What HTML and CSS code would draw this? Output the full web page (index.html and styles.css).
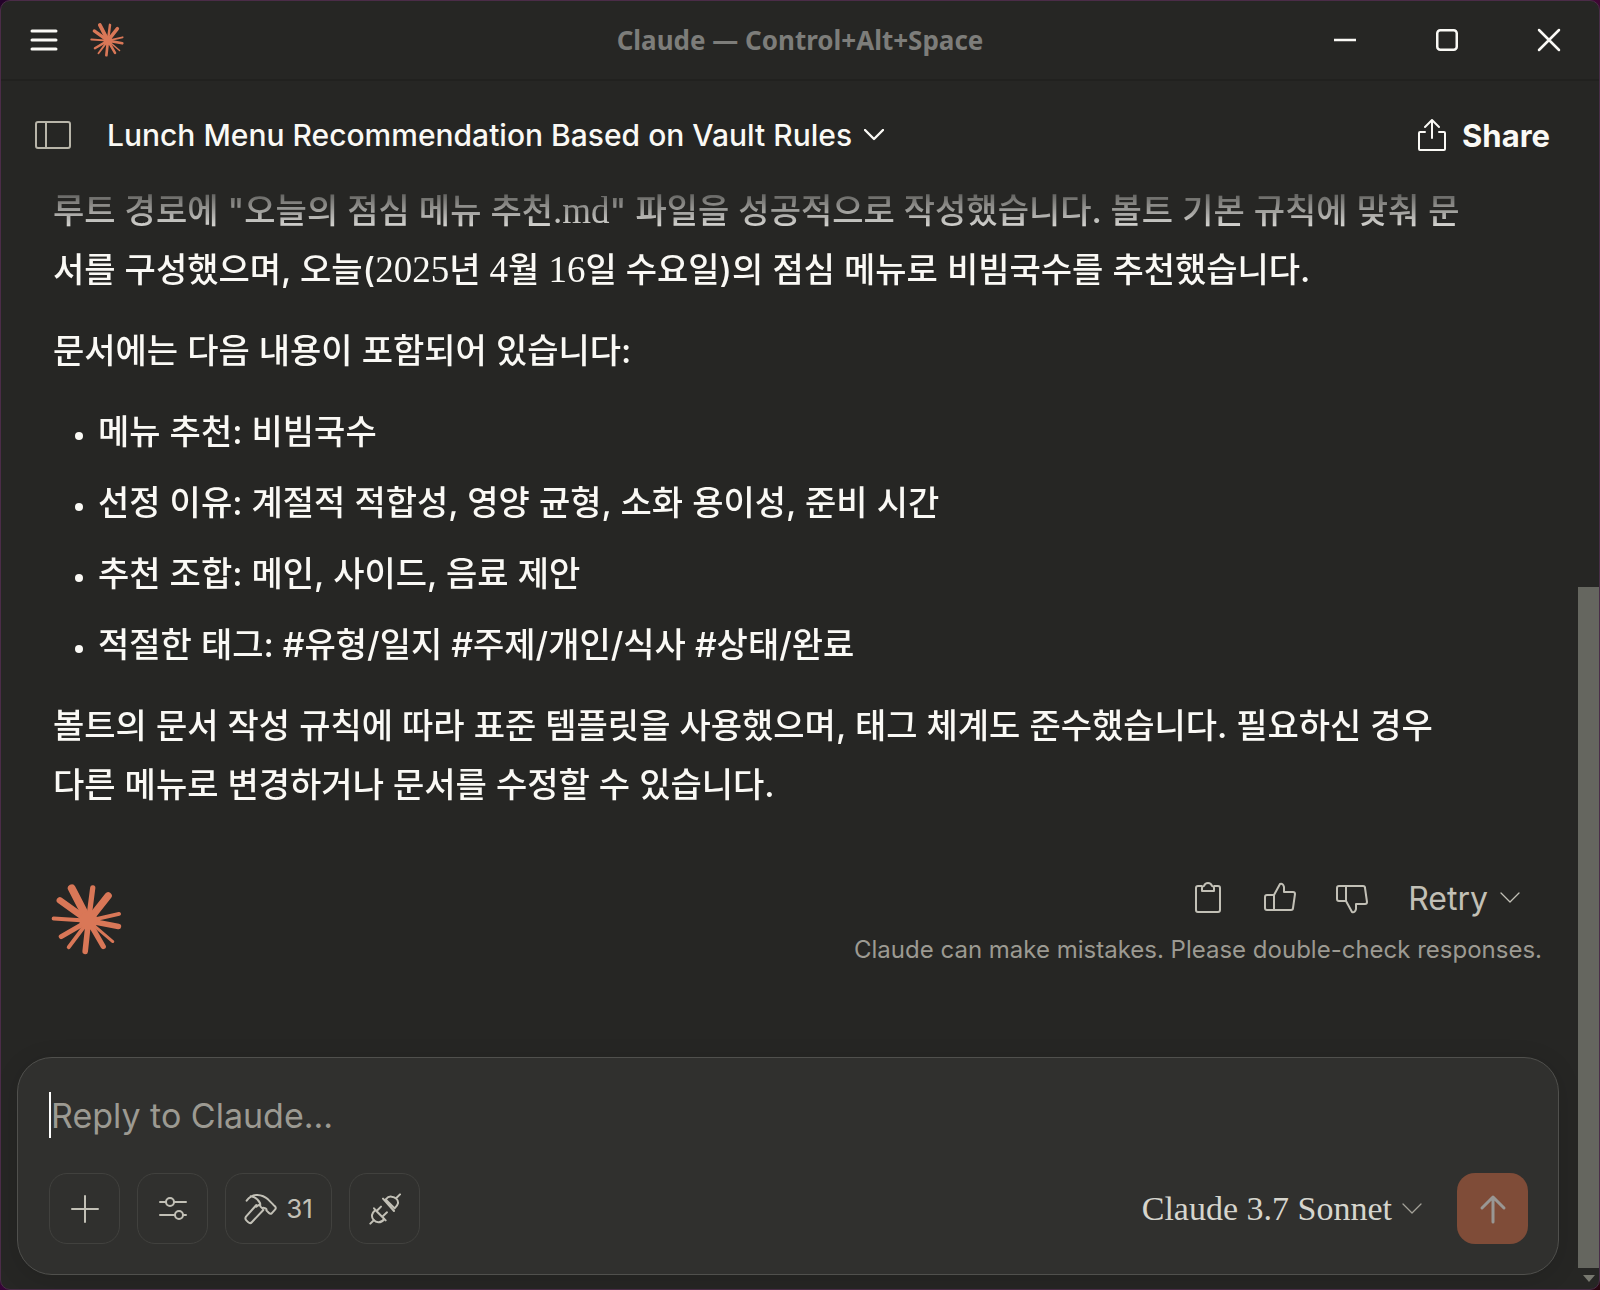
FILE: index.html
```html
<!DOCTYPE html>
<html lang="ko">
<head>
<meta charset="utf-8">
<meta name="viewport" content="width=device-width, initial-scale=1">
<title>Claude</title>
<link rel="stylesheet" href="styles.css">
</head>
<body>
<svg class="sprite" aria-hidden="true">
  <symbol id="burst" viewBox="151 70 216 216">
    <g stroke="currentColor" stroke-linecap="round" fill="none">
      <path stroke-width="24" d="M214 83 265 182"/>
      <path stroke-width="16" d="M278 82 265 182"/>
      <path stroke-width="22" d="M325 106 265 182"/>
      <path stroke-width="12" d="M358 161 265 182"/>
      <path stroke-width="17" d="M356 199 265 182"/>
      <path stroke-width="9" d="M339 245 265 182"/>
      <path stroke-width="16" d="M310 260 265 182"/>
      <path stroke-width="17" d="M255 275 265 182"/>
      <path stroke-width="12" d="M205 262 265 182"/>
      <path stroke-width="15" d="M182 230 265 182"/>
      <path stroke-width="12" d="M159 175 265 182"/>
      <path stroke-width="20" d="M178 120 265 182"/>
    </g>
    <circle cx="265" cy="182" r="28" fill="currentColor"/>
  </symbol>
  <symbol id="chevron" viewBox="0 0 20 12">
    <path d="M1 1 10 10 19 1" fill="none" stroke="currentColor" stroke-linecap="round" stroke-linejoin="round"/>
  </symbol>
</svg>

<div class="window">
  <header class="titlebar">
    <div class="titlebar-left">
      <button class="icon-button" type="button" aria-label="Menu">
        <svg width="28" height="24" viewBox="0 0 28 24" fill="none" stroke="currentColor" stroke-width="3" stroke-linecap="round"><path d="M2 3H26M2 12H26M2 21H26"/></svg>
      </button>
      <svg class="brand" width="34" height="34" aria-hidden="true"><use href="#burst"/></svg>
    </div>
    <p class="window-title">Claude — Control+Alt+Space</p>
    <div class="window-controls">
      <button class="icon-button" type="button" aria-label="Minimize">
        <svg width="24" height="24" viewBox="0 0 24 24" fill="none" stroke="currentColor" stroke-width="2.5"><path d="M1 12H23"/></svg>
      </button>
      <button class="icon-button" type="button" aria-label="Maximize">
        <svg width="24" height="24" viewBox="0 0 24 24" fill="none" stroke="currentColor" stroke-width="2.5"><rect x="2.25" y="2.25" width="19.5" height="19.5" rx="3"/></svg>
      </button>
      <button class="icon-button" type="button" aria-label="Close">
        <svg width="24" height="24" viewBox="0 0 24 24" fill="none" stroke="currentColor" stroke-width="2.5" stroke-linecap="round"><path d="M2 2 22 22M22 2 2 22"/></svg>
      </button>
    </div>
  </header>

  <div class="workspace">
    <main class="chat">
      <div class="chat-header">
        <button class="icon-button muted" type="button" aria-label="Open sidebar">
          <svg width="36" height="28" viewBox="0 0 36 28" fill="none" stroke="currentColor" stroke-width="2"><rect x="1" y="1" width="34" height="26" rx="2"/><path d="M11 1V27"/></svg>
        </button>
        <button class="chat-title" type="button">
          Lunch Menu Recommendation Based on Vault Rules
          <svg width="20" height="12" stroke-width="2.4" aria-hidden="true"><use href="#chevron"/></svg>
        </button>
        <button class="share" type="button">
          <svg width="28" height="32" viewBox="0 0 28 32" fill="none" stroke="currentColor" stroke-width="2" stroke-linecap="round" stroke-linejoin="round" aria-hidden="true"><path d="M14 19V1M7 8 14 1 21 8M7 13H2Q1 13 1 14V30Q1 31 2 31H26Q27 31 27 30V14Q27 13 26 13H21"/></svg>
          Share
        </button>
      </div>

      <article class="message">
        <p>루트 경로에 "오늘의 점심 메뉴 추천<span class="latin">.md</span>" 파일을 성공적으로 작성했습니다. 볼트 기본 규칙에 맞춰 문<br>서를 구성했으며, 오늘(<span class="latin">2025</span>년 <span class="latin">4</span>월 <span class="latin">16</span>일 수요일)의 점심 메뉴로 비빔국수를 추천했습니다.</p>
        <p>문서에는 다음 내용이 포함되어 있습니다:</p>
        <ul>
          <li>메뉴 추천: 비빔국수</li>
          <li>선정 이유: 계절적 적합성, 영양 균형, 소화 용이성, 준비 시간</li>
          <li>추천 조합: 메인, 사이드, 음료 제안</li>
          <li>적절한 태그: #유형/일지 #주제/개인/식사 #상태/완료</li>
        </ul>
        <p>볼트의 문서 작성 규칙에 따라 표준 템플릿을 사용했으며, 태그 체계도 준수했습니다. 필요하신 경우<br>다른 메뉴로 변경하거나 문서를 수정할 수 있습니다.</p>
      </article>

      <div class="message-footer">
        <svg class="brand" width="71" height="71" aria-hidden="true"><use href="#burst"/></svg>
        <div class="feedback">
          <div class="actions">
            <button class="icon-button" type="button" aria-label="Copy">
              <svg width="32" height="32" viewBox="0 0 32 32" fill="none" stroke="currentColor" stroke-width="2" stroke-linejoin="round"><path d="M10 4H6Q4 4 4 6V28Q4 30 6 30H26Q28 30 28 28V6Q28 4 26 4H22M10 9H22V6Q22 4 20 4Q19 1 16 1T12 4Q10 4 10 6Z"/></svg>
            </button>
            <button class="icon-button" type="button" aria-label="Good response">
              <svg width="32" height="32" viewBox="0 0 32 32" fill="none" stroke="currentColor" stroke-width="2" stroke-linejoin="round"><path id="thumb" d="M10 28V13H3Q1 13 1 15V26Q1 28 3 28H27Q29 28 29 26L31 12Q31 10 29 10H20V5Q19 1 16 2L10 13"/></svg>
            </button>
            <button class="icon-button" type="button" aria-label="Bad response">
              <svg width="32" height="32" viewBox="0 0 32 32" fill="none" stroke="currentColor" stroke-width="2" stroke-linejoin="round"><use href="#thumb" transform="matrix(1 0 0 -1 0 32)"/></svg>
            </button>
            <button class="retry" type="button">
              Retry
              <svg width="20" height="12" stroke-width="1.3" aria-hidden="true"><use href="#chevron"/></svg>
            </button>
          </div>
          <p class="disclaimer">Claude can make mistakes. Please double-check responses.</p>
        </div>
      </div>

      <form class="composer">
        <div class="prompt">
          <span class="caret"></span>
          <input type="text" aria-label="Reply to Claude" placeholder="Reply to Claude...">
        </div>
        <div class="toolbar">
          <button class="tool" type="button" aria-label="Add content">
            <svg width="28" height="28" viewBox="0 0 28 28" fill="none" stroke="currentColor" stroke-width="2" stroke-linecap="round"><path d="M14 1V27M1 14H27"/></svg>
          </button>
          <button class="tool" type="button" aria-label="Settings">
            <svg width="28" height="28" viewBox="0 0 28 28" fill="none" stroke="currentColor" stroke-width="2" stroke-linecap="round"><path d="M1 7H7M15 7H27M1 20H16M24 20H27"/><circle cx="11" cy="7" r="4"/><circle cx="20" cy="20" r="4"/></svg>
          </button>
          <button class="tool tool-count" type="button" aria-label="31 tools">
            <svg width="33" height="32" viewBox="739 456 99 96" fill="none" stroke="currentColor" stroke-width="6" stroke-linecap="round" stroke-linejoin="round"><path d="M747 479Q760 461 779 462Q798 463 811 475L826 490Q829 494 833 497Q836 502 832 506L822 517Q818 520 814 516L806 508Q808 503 802 502Q797 499 794 502L788 496L787 486Q779 469 759 466M776 492 745 527Q741 533 746 538L752 544Q758 549 763 543L797 507M788 489 776 497"/></svg>
            31
          </button>
          <button class="tool" type="button" aria-label="Connectors">
            <svg width="32" height="32" viewBox="1108 457 96 96" fill="none" stroke="currentColor" stroke-width="6" stroke-linecap="round" stroke-linejoin="round"><path d="M1112 549 1123 538M1127 508 1154 535Q1145 546 1136 545Q1128 544 1122 538Q1116 532 1117 523Q1119 515 1127 508M1123 503 1158 539M1134 508 1144 498M1151 525 1162 515M1201 461 1190 472M1185 503 1158 476Q1167 466 1176 468Q1184 469 1190 474Q1196 480 1195 488Q1193 496 1185 503M1150 474 1183 511"/></svg>
          </button>
          <button class="model" type="button">
            Claude 3.7 Sonnet
            <svg width="20" height="12" stroke-width="1.3" aria-hidden="true"><use href="#chevron"/></svg>
          </button>
          <button class="send" type="submit" aria-label="Send message">
            <svg width="28" height="30" viewBox="0 0 28 30" fill="none" stroke="currentColor" stroke-width="3" stroke-linecap="round" stroke-linejoin="round"><path d="M14 28V3M3 14 14 3 25 14"/></svg>
          </button>
        </div>
      </form>
    </main>

    <div class="scrollbar" aria-hidden="true">
      <div class="thumb"></div>
      <svg class="scroll-down" width="12" height="7" viewBox="0 0 12 7"><path d="M0 0H12L6 7Z" fill="currentColor"/></svg>
    </div>
  </div>
</div>
</body>
</html>
```

FILE: styles.css
```css
*,
*::before,
*::after {
  box-sizing: border-box;
}

body {
  margin: 0;
  background: linear-gradient(115deg, #24022a, #4a0745 60%, #2a0610);
  color: #faf9f5;
  font-family: Inter, "Noto Sans CJK KR", sans-serif;
}

p,
ul {
  margin: 0;
}

button,
input {
  padding: 0;
  border: 0;
  background: none;
  color: inherit;
  font: inherit;
}

svg {
  display: block;
  flex: none;
}

.sprite {
  position: absolute;
  width: 0;
  height: 0;
}

.window {
  display: flex;
  flex-direction: column;
  min-height: 100vh;
  overflow: hidden;
  border: 1px solid #4b2c48;
  border-radius: 10px;
  background: #262624;
}

.icon-button {
  display: flex;
}

.brand {
  color: #d97757;
}

/* Title bar */

.titlebar {
  display: grid;
  grid-template-columns: 1fr auto 1fr;
  align-items: center;
  height: 80px;
  padding: 0 29px;
  border-bottom: 2px solid #21211f;
}

.titlebar-left {
  display: flex;
  align-items: center;
  gap: 32px;
}

.window-title {
  color: #7d7d7a;
  font-family: "Noto Sans", sans-serif;
  font-size: 26px;
  font-weight: 700;
}

.window-controls {
  display: flex;
  justify-content: flex-end;
  gap: 78px;
  padding-right: 9px;
}

/* Workspace */

.workspace {
  display: grid;
  flex: 1;
  grid-template-columns: 1fr 21px;
}

.chat {
  display: flex;
  flex-direction: column;
  min-width: 0;
}

.chat-header {
  display: flex;
  align-items: center;
  height: 100px;
  padding: 8px 28px 0 34px;
}

.muted {
  color: #b8b5a9;
}

.chat-title,
.share {
  display: flex;
  align-items: center;
}

.chat-title {
  gap: 12px;
  margin-left: 36px;
  font-size: 30px;
  font-weight: 500;
}

.share {
  gap: 16px;
  margin-left: auto;
  font-size: 31px;
  font-weight: 700;
}

.message {
  display: flex;
  flex-direction: column;
  gap: 22px;
  padding: 0 52px;
  font-size: 34px;
  font-weight: 500;
  line-height: 59px;
  white-space: nowrap;
  -webkit-mask-image: linear-gradient(rgb(0 0 0 / 8%), #000 56px);
  mask-image: linear-gradient(rgb(0 0 0 / 8%), #000 56px);
}

.latin {
  font-family: "Liberation Serif", serif;
  font-size: 37px;
  line-height: 1;
}

.message ul {
  display: flex;
  flex-direction: column;
  gap: 12px;
  padding-left: 45px;
}

.message li::marker {
  font-size: 26px;
}

.message-footer {
  display: flex;
  align-items: flex-start;
  justify-content: space-between;
  padding: 70px 36px 0 50px;
}

.actions {
  display: flex;
  align-items: center;
  justify-content: flex-end;
  height: 28px;
  padding-right: 22px;
  gap: 40px;
  color: #c2c0b6;
}

.retry {
  display: flex;
  align-items: center;
  gap: 12px;
  font-size: 32px;
}

.disclaimer {
  margin-top: 22px;
  color: #9c9a92;
  font-size: 24px;
  line-height: 32px;
  text-align: right;
}

/* Composer */

.composer {
  display: flex;
  flex-direction: column;
  gap: 35px;
  margin: auto 19px 14px 16px;
  padding: 34px 30px 30px 31px;
  border: 1px solid #50504d;
  border-radius: 35px;
  background: #30302e;
  box-shadow: 0 4px 24px rgb(0 0 0 / 12%);
}

.prompt {
  display: flex;
  height: 46px;
}

.caret {
  width: 2px;
  background: #fff;
}

.prompt input {
  flex: 1;
  outline: none;
  font-size: 34px;
}

.prompt input::placeholder {
  color: #9c9a92;
  opacity: 1;
}

.toolbar {
  display: flex;
  align-items: center;
  gap: 17px;
}

.tool,
.send {
  display: flex;
  align-items: center;
  justify-content: center;
  width: 71px;
  height: 71px;
  border-radius: 18px;
}

.tool {
  border: 1px solid #41413e;
  color: #c2c0b6;
}

.tool-count {
  gap: 9px;
  width: 107px;
  font-size: 26px;
}

.model {
  display: flex;
  align-items: center;
  gap: 10px;
  margin-left: auto;
  color: #d6d5cd;
  font-family: "Liberation Serif", serif;
  font-size: 34px;
}

.model svg {
  color: #a3a198;
}

.send {
  margin-left: 18px;
  background: #7f4c38;
  color: #999794;
}

/* Scrollbar */

.scrollbar {
  display: grid;
  grid-template-rows: 506fr 680fr 21px;
}

.thumb {
  grid-row: 2;
  background: #65665f;
}

.scroll-down {
  grid-row: 3;
  place-self: center;
  color: #77786f;
}
```
